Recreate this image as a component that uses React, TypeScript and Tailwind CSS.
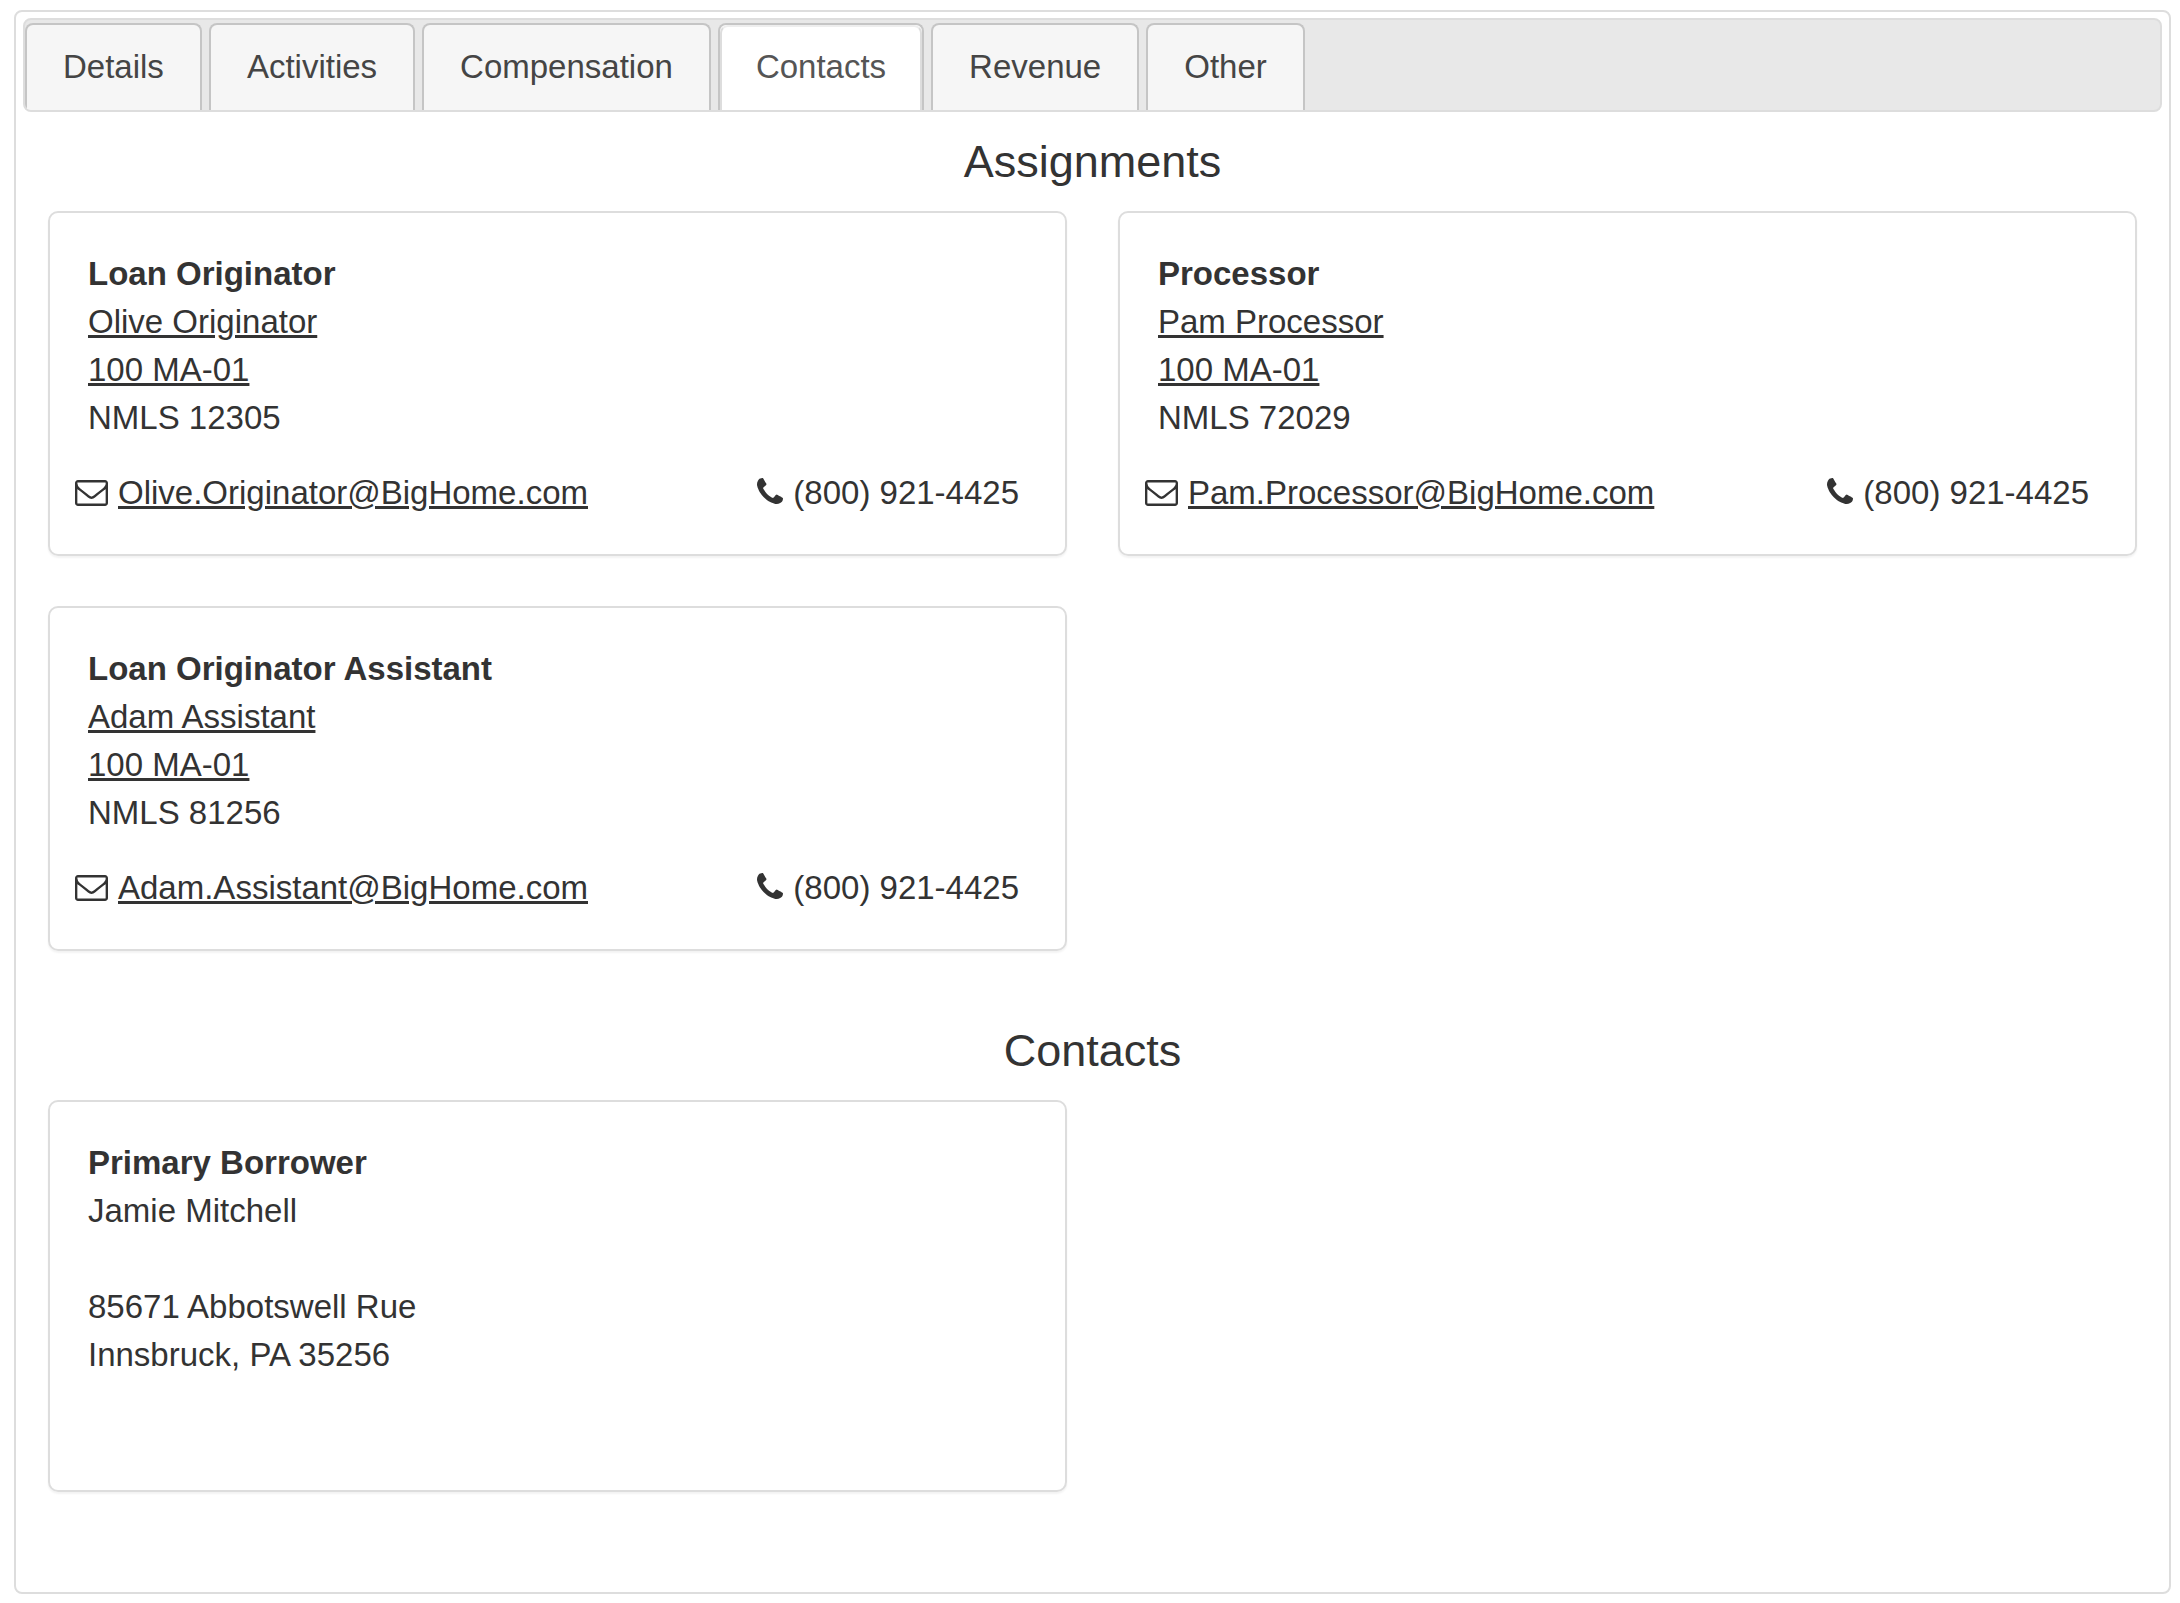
import React from 'react';

interface Assignment {
  role: string;
  name: string;
  branch: string;
  nmls: string;
  email: string;
  phone: string;
}

const tabs = ['Details', 'Activities', 'Compensation', 'Contacts', 'Revenue', 'Other'];

const assignments: Assignment[] = [
  {
    role: 'Loan Originator',
    name: 'Olive Originator',
    branch: '100 MA-01',
    nmls: '12305',
    email: 'Olive.Originator@BigHome.com',
    phone: '(800) 921-4425',
  },
  {
    role: 'Processor',
    name: 'Pam Processor',
    branch: '100 MA-01',
    nmls: '72029',
    email: 'Pam.Processor@BigHome.com',
    phone: '(800) 921-4425',
  },
  {
    role: 'Loan Originator Assistant',
    name: 'Adam Assistant',
    branch: '100 MA-01',
    nmls: '81256',
    email: 'Adam.Assistant@BigHome.com',
    phone: '(800) 921-4425',
  },
];

const linkClass = 'underline decoration-[3px] underline-offset-[2px]';

const EnvelopeIcon: React.FC = () => (
  <svg viewBox="0 256 1792 1408" className="h-[26px] w-[33px] shrink-0 fill-current" aria-hidden="true">
    <path d="M1664 1504v-768q-32 36-69 66-268 206-426 338-51 43-83 67t-86.5 48.5-102.5 24.5h-2q-48 0-102.5-24.5t-86.5-48.5-83-67q-158-132-426-338-37-30-69-66v768q0 13 9.5 22.5t22.5 9.5h1472q13 0 22.5-9.5t9.5-22.5zm0-1051v-24.5l-.5-13-3-12.5-5.5-9-9-7.5-14-2.5h-1472q-13 0-22.5 9.5t-9.5 22.5q0 168 147 284 193 152 401 317 6 5 35 29.5t46 37.5 44.5 31.5 50.5 27.5 43 9h2q20 0 43-9t50.5-27.5 44.5-31.5 46-37.5 35-29.5q208-165 401-317 54-43 100.5-115.5t46.5-131.5zm128-37v1088q0 66-47 113t-113 47h-1472q-66 0-113-47t-47-113v-1088q0-66 47-113t113-47h1472q66 0 113 47t47 113z" />
  </svg>
);

const PhoneIcon: React.FC = () => (
  <svg viewBox="192 128 1408 1408" className="mb-1 h-[26px] w-[26px] shrink-0 fill-current" aria-hidden="true">
    <path d="M1600 1240q0 27-10 70.5t-21 68.5q-21 50-122 106-94 51-186 51-27 0-53-3.5t-57.5-12.5-47-14.5-55.5-20.5-49-18q-98-35-175-83-127-79-264-216t-216-264q-48-77-83-175-3-9-18-49t-20.5-55.5-14.5-47-12.5-57.5-3.5-53q0-92 51-186 56-101 106-122 25-11 68.5-21t70.5-10q14 0 21 3 18 6 53 76 11 19 30 54t35 63.5 31 53.5q3 4 17.5 25t21.5 35.5 7 28.5q0 20-28.5 50t-62 55-62 53-28.5 46q0 9 5 22.5t8.5 20.5 14 24 11.5 19q76 137 174 235t235 174q2 1 19 11.5t24 14 20.5 8.5 22.5 5q18 0 46-28.5t53-62 55-62 50-28.5q14 0 28.5 7t35.5 21.5 25 17.5q25 15 53.5 31t63.5 35 54 30q70 35 76 53 3 7 3 21z" />
  </svg>
);

const Card: React.FC<{ children: React.ReactNode }> = ({ children }) => (
  <article className="rounded-[10px] border-2 border-[#ddd] py-[37px] shadow-[0_2px_2px_rgba(0,0,0,0.05)]">
    {children}
  </article>
);

const AssignmentCard: React.FC<{ item: Assignment }> = ({ item }) => (
  <Card>
    <div className="px-[38px]">
      <h3 className="font-bold">{item.role}</h3>
      <p><a href="#" className={linkClass}>{item.name}</a></p>
      <p><a href="#" className={linkClass}>{item.branch}</a></p>
      <p>NMLS {item.nmls}</p>
    </div>
    <div className="mt-[27px] flex justify-between pr-[46px] pl-[25px]">
      <div className="flex items-center gap-[10px]">
        <EnvelopeIcon />
        <a href={`mailto:${item.email}`} className={linkClass}>{item.email}</a>
      </div>
      <div className="flex items-center gap-[10px]">
        <PhoneIcon />
        <span>{item.phone}</span>
      </div>
    </div>
  </Card>
);

/**
 * Tabbed loan panel, opened on the Contacts tab
 */
const App: React.FC = () => {
  return (
    <div className="bg-white pt-[10px] pr-[9px] pb-[9px] pl-[14px] font-['Liberation_Sans',Arial,sans-serif] text-[33px] leading-[48px] text-[#333]">
      <main className="rounded-lg border-2 border-[#ddd] px-[7px] pt-[6px] pb-[100px]">
        <div role="tablist" className="flex gap-[7px] overflow-hidden rounded-lg border-2 border-[#ddd] bg-[#e8e8e8] pt-[3px]">
          {tabs.map(tab => (
            <button
              key={tab}
              role="tab"
              aria-selected={tab === 'Contacts'}
              className={
                tab === 'Contacts'
                  ? 'rounded-t-lg border-2 border-b-0 border-[#c5c5c5] bg-white text-[#555]'
                  : 'rounded-t-lg border-2 border-b-0 border-[#c5c5c5] bg-[#f6f6f6] text-[#454545]'
              }
            >
              <span
                className={
                  tab === 'Contacts'
                    ? 'block rounded-t-lg border-2 border-b-0 border-[#ddd] border-t-[#eee] px-[34px] pt-[16px] pb-[19px]'
                    : 'block px-9 pt-[18px] pb-[19px]'
                }
              >
                {tab}
              </span>
            </button>
          ))}
        </div>

        <div className="px-[25px] pt-[26px]">
          <section>
            <h2 className="text-center text-[45px] leading-[48px]">Assignments</h2>
            <div className="mt-[25px] grid grid-cols-2 gap-x-[51px] gap-y-[50px]">
              {assignments.map(item => (
                <AssignmentCard key={item.role} item={item} />
              ))}
            </div>
          </section>

          <section className="mt-[76px]">
            <h2 className="text-center text-[45px] leading-[48px]">Contacts</h2>
            <div className="mt-[25px] grid grid-cols-2 gap-x-[51px]">
              <Card>
                <div className="px-[38px] pb-[74px]">
                  <h3 className="font-bold">Primary Borrower</h3>
                  <p>Jamie Mitchell</p>
                  <address className="mt-12 not-italic">
                    85671 Abbotswell Rue
                    <br />
                    Innsbruck, PA 35256
                  </address>
                </div>
              </Card>
            </div>
          </section>
        </div>
      </main>
    </div>
  );
};

export default App;
